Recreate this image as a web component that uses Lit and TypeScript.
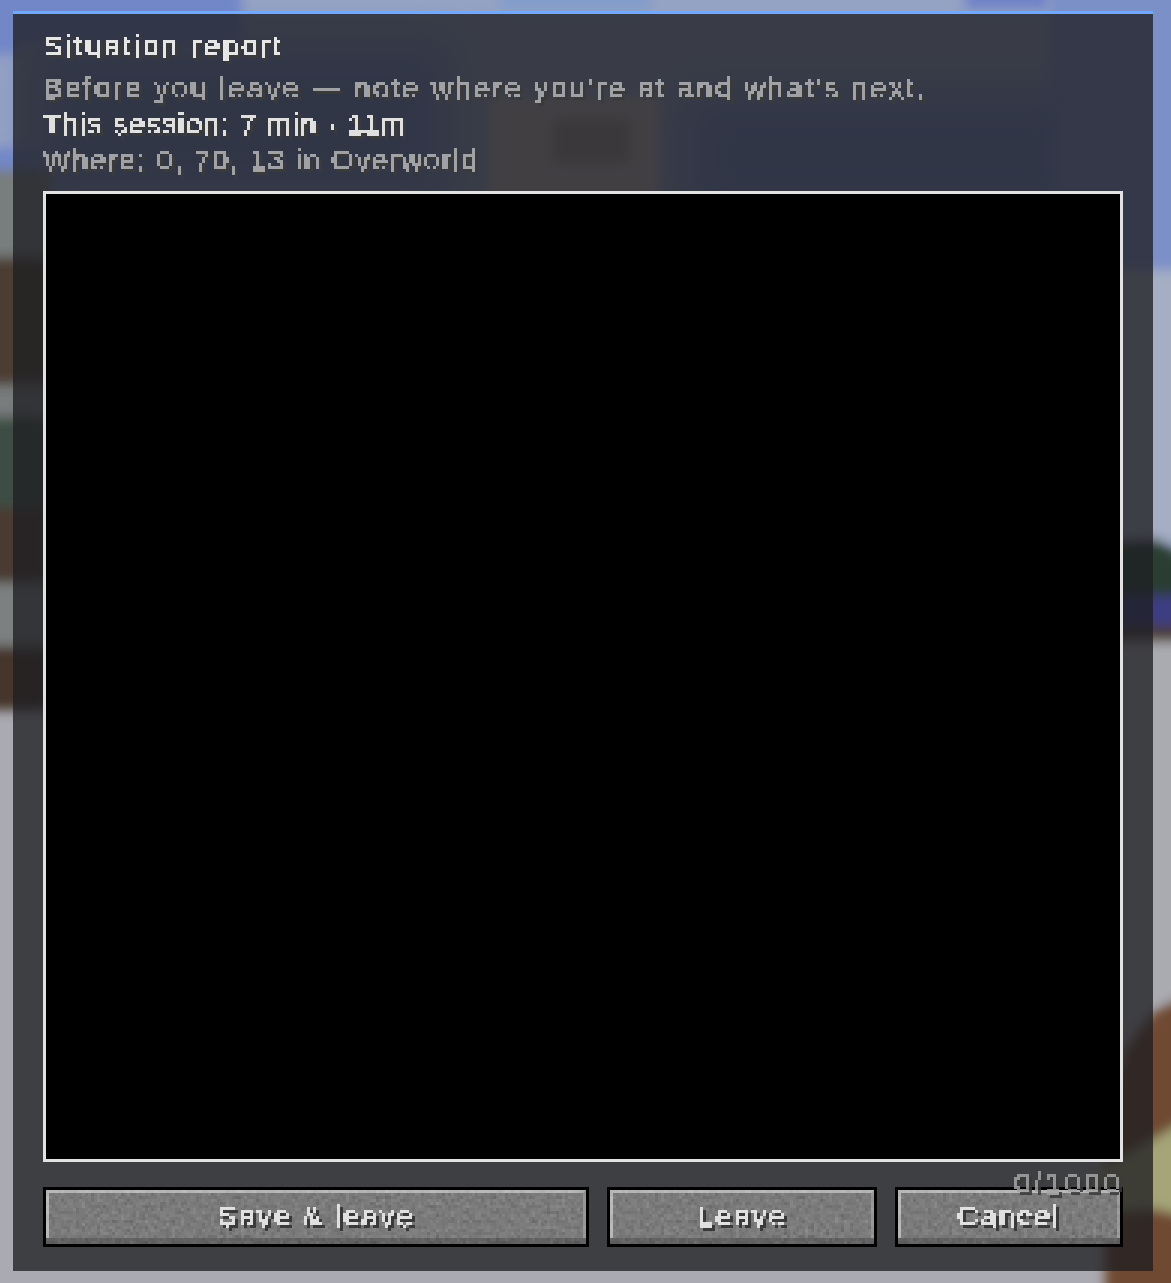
import { LitElement, html, css, svg } from "lit";
import { customElement } from "lit/decorators.js";

const scene = svg`
  <svg class="scene" viewBox="0 0 1171 1283" preserveAspectRatio="none" aria-hidden="true">
    <defs>
      <filter id="blur" x="-5%" y="-5%" width="110%" height="110%"><feGaussianBlur stdDeviation="6"/></filter>
      <filter id="soft" x="-20%" y="-20%" width="140%" height="140%"><feGaussianBlur stdDeviation="22"/></filter>
    </defs>
    <g filter="url(#blur)">
      <rect x="-20" y="-20" width="1211" height="1323" fill="#aaabb2"/>
      <rect x="-20" y="-20" width="1211" height="620" fill="#94a2c3"/>
      <rect x="-20" y="-20" width="262" height="64" fill="#7287c8"/>
      <rect x="-20" y="40" width="40" height="15" fill="#7287c8"/>
      <rect x="500" y="-20" width="150" height="32" fill="#839dca"/>
      <rect x="965" y="-20" width="85" height="30" fill="#7083c8"/>
    </g>
    <g filter="url(#soft)">
      <rect x="30" y="40" width="420" height="160" fill="#7286c4"/>
      <rect x="680" y="90" width="470" height="130" fill="#7286c4"/>
    </g>
    <g filter="url(#blur)">
      <rect x="-20" y="148" width="60" height="22" fill="#7287c8"/>
      <rect x="1050" y="-20" width="140" height="290" fill="#7c90c8"/>
      <rect x="1050" y="270" width="140" height="270" fill="#a5aec3"/>
      <rect x="-20" y="170" width="70" height="88" fill="#787d7d"/>
      <rect x="-20" y="257" width="70" height="128" fill="#4b3c32"/>
      <rect x="-20" y="385" width="70" height="32" fill="#787c7c"/>
      <rect x="-20" y="417" width="70" height="90" fill="#3d4d44"/>
      <rect x="-20" y="507" width="70" height="76" fill="#4a3a30"/>
      <rect x="-20" y="583" width="70" height="63" fill="#7c8080"/>
      <rect x="-20" y="646" width="70" height="64" fill="#44342c"/>
      <rect x="490" y="98" width="168" height="110" fill="#b8aeb0"/>
      <rect x="552" y="118" width="78" height="46" fill="#96908f"/>
      <polygon points="1110,540 1155,538 1190,560 1190,596 1110,596" fill="#2c3d33"/>
      <rect x="1110" y="596" width="90" height="30" fill="#3c3c82"/>
      <rect x="1110" y="626" width="90" height="16" fill="#4b3e34"/>
      <rect x="1110" y="642" width="90" height="360" fill="#aaabb0"/>
      <polygon points="1105,1303 1105,1110 1125,1050 1153,1012 1190,992 1190,1303" fill="#6f4a30"/>
      <polygon points="1090,1178 1153,1140 1190,1118 1190,1218 1153,1208 1095,1212" fill="#a5a578"/>
    </g>
  </svg>`;

const filters = svg`
  <svg class="defs" width="0" height="0" aria-hidden="true">
    <filter id="px" x="-2%" y="-10%" width="104%" height="130%" color-interpolation-filters="sRGB">
      <feFlood x="1" y="1" width="1" height="1" flood-color="#000"/>
      <feComposite width="3" height="3"/>
      <feTile result="grid"/>
      <feComposite in="SourceGraphic" in2="grid" operator="in"/>
      <feComponentTransfer><feFuncA type="discrete" tableValues="0 1 1 1"/></feComponentTransfer>
      <feMorphology operator="dilate" radius="1" result="pix"/>
      <feOffset in="pix" dx="3" dy="3" result="off"/>
      <feFlood flood-color="#3a3a3a"/>
      <feComposite in2="off" operator="in" result="shadow"/>
      <feMerge><feMergeNode in="shadow"/><feMergeNode in="pix"/></feMerge>
    </filter>
    <filter id="stone" x="0" y="0" width="100%" height="100%" color-interpolation-filters="sRGB">
      <feTurbulence type="fractalNoise" baseFrequency="0.2" numOctaves="2" seed="7"/>
      <feColorMatrix values="0.2 0 0 0 0.38  0.2 0 0 0 0.38  0.2 0 0 0 0.38  0 0 0 0 1" result="n"/>
      <feFlood x="1" y="1" width="1" height="1" flood-color="#000"/>
      <feComposite width="3" height="3"/>
      <feTile result="grid"/>
      <feComposite in="n" in2="grid" operator="in"/>
      <feMorphology operator="dilate" radius="1"/>
    </filter>
  </svg>`;

@customElement("app-root")
export class AppRoot extends LitElement {
  static styles = css`
    :host {
      display: block;
      position: relative;
      width: 1171px;
      height: 1283px;
      box-sizing: border-box;
      padding: 11px 18px 12px 13px;
      overflow: hidden;
      background: #aaabb2;
      font-family: "Liberation Sans", Arial, sans-serif;
      font-size: 29px;
      line-height: 36px;
    }
    .scene { position: absolute; inset: 0; width: 100%; height: 100%; }
    .defs { position: absolute; }
    .panel {
      position: relative;
      box-sizing: border-box;
      height: 1260px;
      display: flex;
      flex-direction: column;
      padding: 14px 30px 24px 30px;
      border-top: 3px solid #72a9ff;
      background: rgba(30, 30, 34, 0.77);
    }
    .t { display: block; filter: url(#px); white-space: nowrap; -webkit-text-stroke: 0.25px currentColor; }
    .title { color: #e6e6e6; margin-bottom: 6px; letter-spacing: 2.75px; }
    .dim { color: #a0a2a6; }
    .bright { color: #e0e0e0; }
    .note { letter-spacing: 2.55px; }
    .session { letter-spacing: 1.4px; }
    .where { letter-spacing: 1.75px; }
    .field {
      position: relative;
      flex: 1;
      margin-top: 13px;
      box-sizing: border-box;
      border: 3px solid #e2e2e2;
      background: #000;
    }
    .count {
      position: absolute;
      top: calc(100% + 6px);
      right: -3px;
      z-index: 2;
      color: #a4a4a4;
      letter-spacing: 3.4px;
      opacity: 0.85;
    }
    .actions {
      display: grid;
      grid-template-columns: 546fr 270fr 228fr;
      gap: 18px;
      margin-top: 25px;
    }
    .btn {
      position: relative;
      box-sizing: border-box;
      height: 60px;
      padding: 0;
      border: 3px solid #000;
      background: #7a7a7a;
      font: inherit;
      cursor: pointer;
      display: flex;
      align-items: center;
      justify-content: center;
      overflow: hidden;
    }
    .tex { position: absolute; inset: 0; background: #777; filter: url(#stone); }
    .bevel {
      position: absolute;
      inset: 0 0 6px 0;
      border-style: solid;
      border-width: 3px 3px 0 3px;
      border-color: rgba(255, 255, 255, 0.45) rgba(255, 255, 255, 0.22) transparent rgba(255, 255, 255, 0.45);
    }
    .band { position: absolute; left: 0; right: 0; bottom: 0; height: 6px; background: rgba(0, 0, 0, 0.2); }
    .label { position: relative; color: #e0e0e0; letter-spacing: 2.2px; margin-top: -3px; }
  `;

  render() {
    return html`
      ${scene}${filters}
      <section class="panel">
        <div class="t title">Situation report</div>
        <div class="t dim note">Before you leave — note where you're at and what's next.</div>
        <div class="t bright session">This session: 7 min · 11m</div>
        <div class="t dim where">Where: 0, 70, 13 in Overworld</div>
        <div class="field"><span class="t count">0/1000</span></div>
        <div class="actions">
          ${["Save & leave", "Leave", "Cancel"].map(
            (l) => html`<button class="btn"><span class="tex"></span><span class="bevel"></span><span class="band"></span><span class="t label">${l}</span></button>`
          )}
        </div>
      </section>
    `;
  }
}
